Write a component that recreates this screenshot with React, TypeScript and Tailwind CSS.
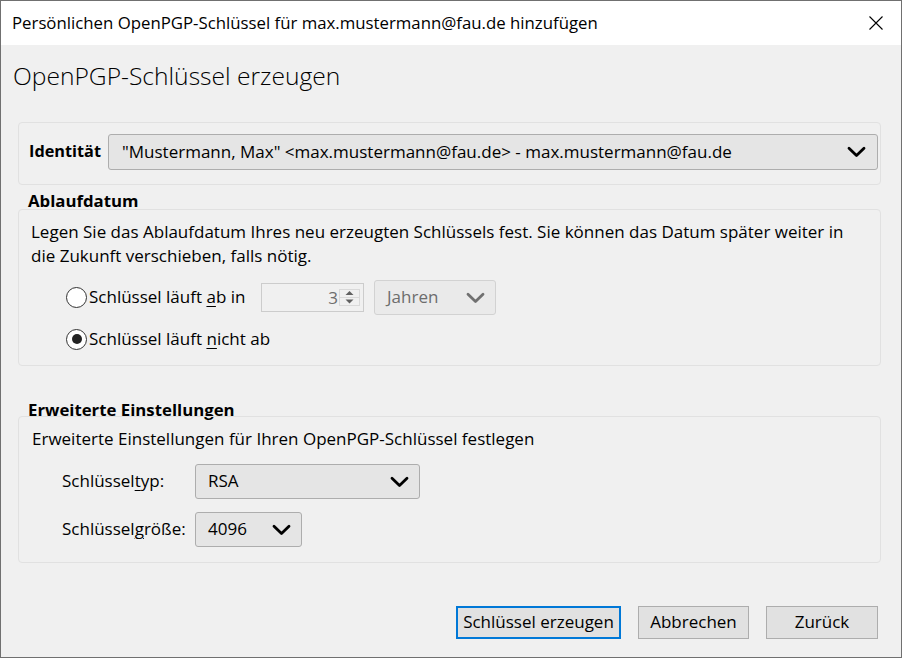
import React from "react";

function Chevron({ className }: { className?: string }) {
  return (
    <svg width="19" height="12" viewBox="0 0 19 12" className={className}>
      <path d="M2 2.2l7.5 7.3 7.5-7.3" fill="none" stroke="currentColor" strokeWidth="2.8" strokeLinecap="round" strokeLinejoin="round" />
    </svg>
  );
}

function Radio({ checked }: { checked?: boolean }) {
  return (
    <span className="w-[21px] h-[21px] rounded-full border border-[#333333] bg-white flex items-center justify-center shrink-0">
      {checked && <span className="w-[10px] h-[10px] rounded-full bg-[#222222]" />}
    </span>
  );
}

function Select({ children, className, disabled }: { children: React.ReactNode; className?: string; disabled?: boolean }) {
  return (
    <div
      className={
        "flex items-center justify-between h-[35px] pl-[12px] pr-[10px] rounded-[3px] border " +
        (disabled ? "bg-[#eaeaea] border-[#d2d2d2] text-[#6d6d6d] " : "bg-[#e5e5e5] border-[#adadad] text-black ") +
        (className ?? "")
      }
    >
      <span className="whitespace-nowrap -mt-[2px]">{children}</span>
      <Chevron className={disabled ? "text-[#707070]" : "text-black"} />
    </div>
  );
}

export default function App() {
  return (
    <div className="w-[902px] h-[658px] bg-[#f0f0f0] border border-[#707070] flex flex-col overflow-hidden text-black font-['Open_Sans',sans-serif]">
      <div className="h-[44px] shrink-0 bg-white flex items-center justify-between pl-[11px] pr-[18px]">
        <span className="text-[16.8px] whitespace-nowrap">Persönlichen OpenPGP-Schlüssel für max.mustermann@fau.de hinzufügen</span>
        <svg width="14" height="14" viewBox="0 0 14 14">
          <path d="M0.5 0.5L13.5 13.5M13.5 0.5L0.5 13.5" stroke="#000" strokeWidth="1.1" />
        </svg>
      </div>

      <div className="flex flex-col pl-[17px] pr-[20px] text-[17px]">
        <div className="mt-[15px] -ml-[5px] h-[32px] leading-[32px] text-[24.6px] font-light whitespace-nowrap">OpenPGP-Schlüssel erzeugen</div>

        <div className="mt-[30px] border border-[#e1e1e1] rounded-[4px] pl-[10px] pr-[2px] pt-[11px] pb-[14px] flex items-center">
          <span className="w-[79px] font-bold text-[16.3px] shrink-0 -mt-[1px]">Identität</span>
          <div className="flex-1 flex items-center justify-between h-[36px] pl-[13px] pr-[11px] rounded-[3px] border border-[#adadad] bg-[#e5e5e5]">
            <span className="whitespace-nowrap -mt-[1px]">"Mustermann, Max" &lt;max.mustermann@fau.de&gt; - max.mustermann@fau.de</span>
            <Chevron />
          </div>
        </div>

        <div className="mt-[8px] h-[16px] leading-[16px] pl-[10px] font-bold text-[16.8px]">Ablaufdatum</div>
        <div className="border border-[#e1e1e1] rounded-[4px] px-[12px] pt-[11px] pb-[14px] flex flex-col">
          <p className="leading-[24px] whitespace-nowrap -mt-[1px] mb-[1px]">
            Legen Sie das Ablaufdatum Ihres neu erzeugten Schlüssels fest. Sie können das Datum später weiter in
            <br />
            die Zukunft verschieben, falls nötig.
          </p>
          <div className="mt-[11px] h-[35px] flex items-center pl-[35px]">
            <div className="w-[195px] flex items-center gap-[2px]">
              <Radio />
              <span className="whitespace-nowrap -mt-[1px]">
                Schlüssel läuft <span className="underline underline-offset-[3px]">a</span>b in
              </span>
            </div>
            <div className="w-[103px] h-[29px] border border-[#cccccc] bg-[#f0f0f0] flex items-center justify-end pr-[3px]">
              <span className="text-[#6d6d6d] leading-none">3</span>
              <svg width="21" height="17" viewBox="0 0 21 17" className="ml-[1px]">
                <rect x="0.5" y="0.5" width="20" height="16" fill="none" stroke="#d9d9d9" />
                <line x1="0.5" y1="8.5" x2="20.5" y2="8.5" stroke="#d9d9d9" />
                <path d="M6.5 6L10.5 2L14.5 6Z" fill="#606060" />
                <path d="M6.5 10.5L10.5 14.5L14.5 10.5Z" fill="#606060" />
              </svg>
            </div>
            <Select disabled className="ml-[10px] w-[122px]">Jahren</Select>
          </div>
          <div className="mt-[12px] h-[24px] flex items-center pl-[35px] gap-[2px]">
            <Radio checked />
            <span className="whitespace-nowrap -mt-[1px]">
              Schlüssel läuft <span className="underline underline-offset-[3px]">n</span>icht ab
            </span>
          </div>
        </div>

        <div className="mt-[36px] h-[14px] leading-[16px] pl-[10px] font-bold text-[16.8px] whitespace-nowrap">Erweiterte Einstellungen</div>
        <div className="border border-[#e1e1e1] rounded-[4px] px-[13px] pt-[11px] pb-[15px] flex flex-col">
          <p className="leading-[24px] whitespace-nowrap -mt-[1px] mb-[1px]">Erweiterte Einstellungen für Ihren OpenPGP-Schlüssel festlegen</p>
          <div className="mt-[12px] flex items-center pl-[30px]">
            <span className="w-[133px] whitespace-nowrap -mt-[1px]">
              Schlüssel<span className="underline underline-offset-[3px]">t</span>yp:
            </span>
            <Select className="w-[225px]">RSA</Select>
          </div>
          <div className="mt-[13px] flex items-center pl-[30px]">
            <span className="w-[133px] whitespace-nowrap -mt-[1px]">
              Schlüssel<span className="underline underline-offset-[3px]">g</span>röße:
            </span>
            <Select className="w-[107px]">4096</Select>
          </div>
        </div>

        <div className="mt-[43px] flex justify-end gap-[17px] pr-[3px]">
          <button className="w-[165px] h-[33px] pb-[3px] bg-[#e1e1e1] border-2 border-[#0078d7] text-[17px] leading-none">Schlüssel erzeugen</button>
          <button className="w-[111px] h-[33px] pb-[3px] bg-[#e1e1e1] border border-[#adadad] text-[17px] leading-none">Abbrechen</button>
          <button className="w-[112px] h-[33px] pb-[3px] bg-[#e1e1e1] border border-[#adadad] text-[17px] leading-none">Zurück</button>
        </div>
      </div>
    </div>
  );
}
